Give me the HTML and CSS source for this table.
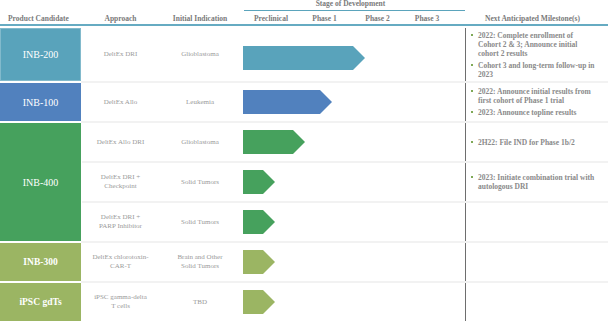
FILE: index.html
```html
<!doctype html>
<html lang="en">
<head>
    <meta charset="utf-8">
    <title>Pipeline</title>
    <link rel="stylesheet" href="styles.css">
</head>
<body>
<div class="pipeline">
    <div class="head">
        <div class="th th-product">Product Candidate</div>
        <div class="th">Approach</div>
        <div class="th">Initial Indication</div>
        <div class="stage">
            <div class="stage-title">Stage of Development</div>
            <div class="phases">
                <span class="ph-pre">Preclinical</span>
                <span class="ph-1">Phase 1</span>
                <span class="ph-2">Phase 2</span>
                <span class="ph-3">Phase 3</span>
            </div>
        </div>
        <div class="th th-milestone">Next Anticipated Milestone(s)</div>
    </div>

    <div class="body">
        <div class="group teal">
            <div class="product">INB-200</div>
            <div class="rows">
                <div class="row row-tall">
                    <div class="cell">DeltEx DRI</div>
                    <div class="cell">Glioblastoma</div>
                    <div class="track"><div class="bar bar-p2"></div></div>
                    <ul class="milestones">
                        <li>2022: Complete enrollment of Cohort 2 &amp; 3; Announce initial cohort 2 results</li>
                        <li>Cohort 3 and long-term follow-up in 2023</li>
                    </ul>
                </div>
            </div>
        </div>

        <div class="group blue">
            <div class="product">INB-100</div>
            <div class="rows">
                <div class="row">
                    <div class="cell">DeltEx Allo</div>
                    <div class="cell">Leukemia</div>
                    <div class="track"><div class="bar bar-p1b"></div></div>
                    <ul class="milestones">
                        <li>2022: Announce initial results from first cohort of Phase 1 trial</li>
                        <li>2023: Announce topline results</li>
                    </ul>
                </div>
            </div>
        </div>

        <div class="group green">
            <div class="product">INB-400</div>
            <div class="rows">
                <div class="row">
                    <div class="cell">DeltEx Allo DRI</div>
                    <div class="cell">Glioblastoma</div>
                    <div class="track"><div class="bar bar-p1a"></div></div>
                    <ul class="milestones">
                        <li>2H22: File IND for Phase 1b/2</li>
                    </ul>
                </div>
                <div class="row">
                    <div class="cell">DeltEx DRI +<br>Checkpoint</div>
                    <div class="cell">Solid Tumors</div>
                    <div class="track"><div class="bar bar-pre"></div></div>
                    <ul class="milestones">
                        <li>2023: Initiate combination trial with autologous DRI</li>
                    </ul>
                </div>
                <div class="row">
                    <div class="cell">DeltEx DRI +<br>PARP Inhibitor</div>
                    <div class="cell">Solid Tumors</div>
                    <div class="track"><div class="bar bar-pre"></div></div>
                    <ul class="milestones"></ul>
                </div>
            </div>
        </div>

        <div class="group olive">
            <div class="product product-bold">INB-300</div>
            <div class="rows">
                <div class="row">
                    <div class="cell">DeltEx chlorotoxin-<br>CAR-T</div>
                    <div class="cell">Brain and Other<br>Solid Tumors</div>
                    <div class="track"><div class="bar bar-pre"></div></div>
                    <ul class="milestones"></ul>
                </div>
            </div>
        </div>

        <div class="group olive">
            <div class="product product-bold">iPSC gdTs</div>
            <div class="rows">
                <div class="row">
                    <div class="cell">iPSC gamma-delta<br>T cells</div>
                    <div class="cell">TBD</div>
                    <div class="track"><div class="bar bar-pre"></div></div>
                    <ul class="milestones"></ul>
                </div>
            </div>
        </div>
    </div>
</div>
</body>
</html>
```

FILE: styles.css
```css
body {
    margin: 0;
    background-color: #ffffff;
    font-family: "Liberation Serif", "Times New Roman", serif;
}

.pipeline {
    width: 608px;
}

/* ===== Header */
.head {
    display: grid;
    grid-template-columns: 82px 77px 82px 224px 1fr;
    align-items: end;
    height: 24px;
    border-bottom: 2px solid #66abc2;
}

.th {
    font-size: 7.5px;
    font-weight: bold;
    line-height: 10px;
    color: #7a7a7a;
    text-align: center;
    white-space: nowrap;
}

.th-product {
    padding-right: 5px;
}

.th-milestone {
    padding-right: 8px;
}

.stage {
    padding-left: 2px;
    font-size: 7.5px;
    font-weight: bold;
    color: #7a7a7a;
}

.stage-title {
    line-height: 8px;
    padding: 0 8px 2px 0;
    margin-left: 1px;
    text-align: center;
    border-bottom: 1px solid #5ba4bc;
}

.phases {
    display: flex;
    margin-top: 3px;
    line-height: 10px;
    text-align: center;
}

.ph-pre { width: 56px; }
.ph-1 { width: 51px; }
.ph-2 { width: 55px; }
.ph-3 { width: 44px; }

/* ===== Rows */
.body {
    padding-top: 2px;
}

.teal { --c: #59a3bb; }
.blue { --c: #5181be; }
.green { --c: #46a15d; }
.olive { --c: #9bb563; }

.group {
    display: flex;
}

.group + .group {
    border-top: 2px solid #f2f2f2;
}

.group + .group .product {
    box-shadow: 0 -2px 0 #ffffff;
}

.product {
    width: 81px;
    margin-right: 1px;
    flex: none;
    display: flex;
    align-items: center;
    justify-content: center;
    background-color: var(--c);
    box-shadow: inset 0 0 0 1px rgba(255, 255, 255, 0.25);
    color: #ffffff;
    font-size: 10px;
}

.product-bold {
    font-weight: bold;
    font-size: 9.5px;
}

.rows {
    flex: 1;
    display: flex;
    flex-direction: column;
}

.row {
    display: grid;
    grid-template-columns: 77px 82px 224px 1fr;
    align-items: center;
    height: 38px;
}

.row + .row {
    border-top: 2px solid #f2f2f2;
}

.row-tall {
    height: 53px;
}

.cell {
    font-size: 7px;
    line-height: 9px;
    color: #9a9a9a;
    text-align: center;
}

.track {
    padding-left: 2px;
}

.bar {
    height: 24px;
    background-color: var(--c);
    clip-path: polygon(0 0, calc(100% - 12px) 0, 100% 50%, calc(100% - 12px) 100%, 0 100%);
}

.row-tall .bar {
    margin-top: 7px;
}

.bar-pre { width: 32px; }
.bar-p1a { width: 62px; }
.bar-p1b { width: 89px; }
.bar-p2 { width: 122px; }

/* ===== Milestones */
.milestones {
    align-self: stretch;
    display: flex;
    flex-direction: column;
    justify-content: center;
    margin: 0;
    padding: 0 13px 0 5px;
    list-style: none;
    border-left: 1px solid #6e6e6e;
    font-size: 7.5px;
    font-weight: bold;
    line-height: 9px;
    color: #8a8a8a;
}

.milestones li {
    display: flex;
}

.milestones li + li {
    margin-top: 3px;
}

.milestones li::before {
    content: "";
    flex: none;
    width: 2px;
    height: 2px;
    margin: 3px 5px 0 0;
    background-color: #7fa957;
}
```
